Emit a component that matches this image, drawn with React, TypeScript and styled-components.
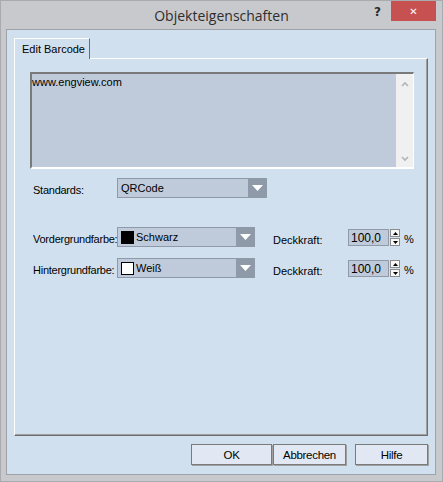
import React from 'react';
import styled, {createGlobalStyle} from 'styled-components';

const GlobalStyle = createGlobalStyle`
    html, body {
        margin: 0;
        padding: 0;
        background: #ffffff;
    }
    * {
        box-sizing: border-box;
    }
`;

const Chevron = ({up}: {up?: boolean}) => (
    <svg
        width='8'
        height='6'
        viewBox='0 0 8 6'
    >
        <polyline
            points={up ? '1,5 4,2 7,5' : '1,1 4,4 7,1'}
            fill='none'
            stroke='#b4b4b4'
            strokeWidth='1.6'
        />
    </svg>
);

const DownTriangle = () => (
    <svg
        width='11'
        height='6'
        viewBox='0 0 11 6'
    >
        <polygon
            points='0,0 11,0 5.5,6'
            fill='#ffffff'
        />
    </svg>
);

const SpinTriangle = ({up}: {up?: boolean}) => (
    <svg
        width='5'
        height='3'
        viewBox='0 0 5 3'
    >
        <polygon
            points={up ? '0,3 5,3 2.5,0' : '0,0 5,0 2.5,3'}
            fill='#000000'
        />
    </svg>
);

interface ComboProps {
    width: number;
    value: string;
    swatch?: string;
}

const Combo = ({width, value, swatch}: ComboProps) => (
    <ComboBox $width={width}>
        <ComboValue>
            {swatch && <Swatch $color={swatch}/>}
            {value}
        </ComboValue>
        <ComboArrow><DownTriangle/></ComboArrow>
    </ComboBox>
);

const Spinner = ({value}: {value: string}) => (
    <SpinWrap>
        <SpinBox>{value}</SpinBox>
        <SpinButtons>
            <SpinButton><SpinTriangle up={true}/></SpinButton>
            <SpinButton><SpinTriangle/></SpinButton>
        </SpinButtons>
        <Percent>{'%'}</Percent>
    </SpinWrap>
);

const App = () => {
    return (
        <>
            <GlobalStyle/>
            <Window>
                <TitleBar>
                    <span/>
                    <Title>{'Objekteigenschaften'}</Title>
                    <TitleControls>
                        <HelpGlyph>{'?'}</HelpGlyph>
                        <CloseButton>{'✕'}</CloseButton>
                    </TitleControls>
                </TitleBar>
                <Client>
                    <TabStrip>
                        <Tab>{'Edit Barcode'}</Tab>
                    </TabStrip>
                    <TabPanel>
                        <TextArea>
                            <TextContent>{'www.engview.com'}</TextContent>
                            <ScrollBar>
                                <Chevron up={true}/>
                                <Chevron/>
                            </ScrollBar>
                        </TextArea>
                        <FormRow $top={9}>
                            <Label>{'Standards:'}</Label>
                            <Combo
                                width={150}
                                value='QRCode'
                            />
                        </FormRow>
                        <FormRow $top={29}>
                            <Label>{'Vordergrundfarbe:'}</Label>
                            <Combo
                                width={138}
                                value='Schwarz'
                                swatch='#000000'
                            />
                            <OpacityLabel>{'Deckkraft:'}</OpacityLabel>
                            <Spinner value='100,0'/>
                        </FormRow>
                        <FormRow $top={11}>
                            <Label>{'Hintergrundfarbe:'}</Label>
                            <Combo
                                width={138}
                                value='Weiß'
                                swatch='#ffffff'
                            />
                            <OpacityLabel>{'Deckkraft:'}</OpacityLabel>
                            <Spinner value='100,0'/>
                        </FormRow>
                    </TabPanel>
                    <ButtonRow>
                        <DialogButton $width={81}>{'OK'}</DialogButton>
                        <DialogButton
                            $width={73}
                            $gap={8}
                        >{'Abbrechen'}</DialogButton>
                        <DialogButton $width={73}>{'Hilfe'}</DialogButton>
                    </ButtonRow>
                </Client>
            </Window>
        </>
    );
};

const Window = styled.div`
    width: 443px;
    height: 482px;
    display: flex;
    flex-direction: column;
    background: #c8c9cc;
    border: 1px solid #a9aaad;
    font-family: "Liberation Sans", Arial, sans-serif;
    font-size: 11px;
    color: #000000;
`;

const TitleBar = styled.div`
    height: 28px;
    display: grid;
    grid-template-columns: 1fr auto 1fr;
    align-items: center;
`;

const Title = styled.div`
    font-family: "Open Sans", "Noto Sans", sans-serif;
    font-size: 14px;
    color: #2e2e2e;
    padding-top: 1px;
`;

const TitleControls = styled.div`
    justify-self: end;
    align-self: start;
    display: flex;
    align-items: flex-start;
    margin-right: 6px;
`;

const HelpGlyph = styled.div`
    font-family: "DejaVu Sans", sans-serif;
    font-weight: bold;
    font-size: 12px;
    color: #2b2b2b;
    margin-top: 4px;
    margin-right: 10px;
`;

const CloseButton = styled.div`
    width: 45px;
    height: 20px;
    background: #c75050;
    color: #ffffff;
    display: flex;
    align-items: center;
    justify-content: center;
    font-family: "DejaVu Sans", sans-serif;
    font-size: 10px;
`;

const Client = styled.div`
    flex: 1;
    margin: 0 6px 6px 5px;
    border: 1px solid #9ea2a7;
    background: #d1e0ef;
    padding: 8px 7px 9px 7px;
    display: flex;
    flex-direction: column;
`;

const TabStrip = styled.div`
    height: 20px;
    display: flex;
    align-items: flex-end;
`;

const Tab = styled.div`
    width: 76px;
    height: 21px;
    margin-bottom: -1px;
    position: relative;
    z-index: 1;
    background: #d1e0ef;
    border-top: 1px solid #ffffff;
    border-left: 1px solid #ffffff;
    border-right: 1px solid #6e6e6e;
    padding: 4px 0 0 7px;
    font-size: 11px;
`;

const TabPanel = styled.div`
    flex: 1;
    border-top: 1px solid #ffffff;
    border-left: 1px solid #ffffff;
    border-right: 1px solid #6e6e6e;
    border-bottom: 1px solid #6e6e6e;
    box-shadow: inset -1px -1px 0 #a0a0a0;
    padding: 13px 0 0 15px;
    display: flex;
    flex-direction: column;
`;

const TextArea = styled.div`
    width: 384px;
    height: 97px;
    display: flex;
    background: #bfcbdb;
    border-top: 2px solid #7a7a7a;
    border-left: 2px solid #7a7a7a;
    border-right: 1px solid #ffffff;
    border-bottom: 2px solid #ffffff;
`;

const TextContent = styled.div`
    flex: 1;
    padding: 2px 0 0 0;
`;

const ScrollBar = styled.div`
    width: 17px;
    background: #f0f0f0;
    display: flex;
    flex-direction: column;
    align-items: center;
    justify-content: space-between;
    padding: 7px 0 5px;
`;

const FormRow = styled.div<{$top: number}>`
    display: flex;
    align-items: center;
    height: 20px;
    margin-top: ${p => p.$top}px;
    margin-left: 3px;
`;

const Label = styled.div`
    width: 84px;
    white-space: nowrap;
    overflow: hidden;
    padding-top: 4px;
    letter-spacing: -0.25px;
`;

const ComboBox = styled.div<{$width: number}>`
    width: ${p => p.$width}px;
    height: 20px;
    display: flex;
    background: #bfcbdb;
    border: 1px solid #8e9aa7;
`;

const ComboValue = styled.div`
    flex: 1;
    display: flex;
    align-items: center;
    gap: 2px;
    padding-left: 3px;
`;

const Swatch = styled.span<{$color: string}>`
    width: 13px;
    height: 13px;
    background: ${p => p.$color};
    border: 1px solid #000000;
`;

const ComboArrow = styled.div`
    width: 18px;
    background: #8e9aa7;
    display: flex;
    align-items: center;
    justify-content: center;
`;

const OpacityLabel = styled.div`
    width: 75px;
    margin-left: 18px;
    padding-top: 5px;
`;

const SpinWrap = styled.div`
    display: flex;
    align-items: center;
    padding-top: 1px;
`;

const SpinBox = styled.div`
    width: 41px;
    height: 17px;
    background: #bfcbdb;
    border: 1px solid #8e9aa7;
    padding: 1px 0 0 2px;
    font-size: 12px;
`;

const SpinButtons = styled.div`
    display: flex;
    flex-direction: column;
    gap: 1px;
    margin-left: 1px;
`;

const SpinButton = styled.div`
    width: 10px;
    height: 8px;
    background: #f7f7f7;
    border: 1px solid #8c8c8c;
    display: flex;
    align-items: center;
    justify-content: center;
`;

const Percent = styled.div`
    margin-left: 4px;
    padding-top: 3px;
`;

const ButtonRow = styled.div`
    margin-top: 8px;
    display: flex;
    justify-content: flex-end;
    gap: 1px;
`;

const DialogButton = styled.div<{$width: number; $gap?: number}>`
    width: ${p => p.$width}px;
    height: 21px;
    margin-right: ${p => p.$gap || 0}px;
    background: #e2e8f3;
    border: 1px solid #7a7a7a;
    box-shadow: 1px 1px 0 #a0a0a0;
    display: flex;
    align-items: center;
    justify-content: center;
    font-size: 11.5px;
    letter-spacing: -0.3px;
`;

export default App;
